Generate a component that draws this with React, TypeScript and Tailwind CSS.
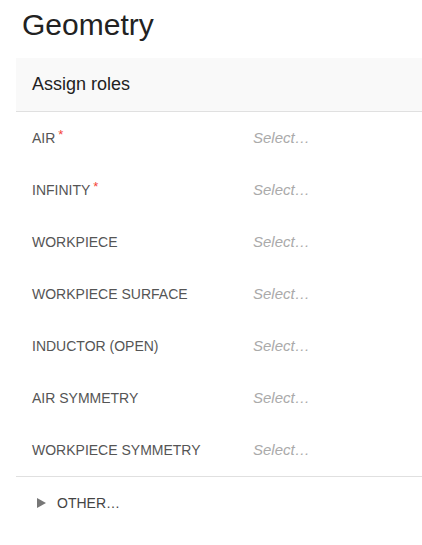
const roles = [
  { name: 'AIR', required: true },
  { name: 'INFINITY', required: true },
  { name: 'WORKPIECE' },
  { name: 'WORKPIECE SURFACE' },
  { name: 'INDUCTOR (OPEN)' },
  { name: 'AIR SYMMETRY' },
  { name: 'WORKPIECE SYMMETRY' },
];

export default function App() {
  return (
    <div className="min-h-screen bg-white pl-4 font-['Liberation_Sans',Arial,sans-serif]">
      <h1 className="ml-[6px] pt-[7px] text-[30px] leading-[36px] text-[#222]">Geometry</h1>
      <div className="mt-[15px]">
        <div className="flex h-[54px] items-center border-b border-[#e0e0e0] bg-[#f9f9f9] px-4">
          <span className="text-[18px] text-[#222]">Assign roles</span>
        </div>
        <div className="border-b border-[#e0e0e0]">
          {roles.map((r) => (
            <div key={r.name} className="flex h-[52px] items-center px-4 pt-[1px]">
              <div className="w-[221px] text-[14px] text-[#555]">
                {r.name}
                {r.required && <span className="relative -top-[4px] ml-[3px] text-[13px] text-[#f44336]">*</span>}
              </div>
              <div className="text-[15px] italic text-[#aaa]">Select…</div>
            </div>
          ))}
        </div>
        <button className="flex h-[52px] items-center gap-[11px] pl-[21px] text-[14px] text-[#444]">
          <svg width="9" height="10" viewBox="0 0 9 10" className="fill-[#777]">
            <path d="M0 0 L9 5 L0 10 Z" />
          </svg>
          <span>OTHER…</span>
        </button>
      </div>
    </div>
  );
}
